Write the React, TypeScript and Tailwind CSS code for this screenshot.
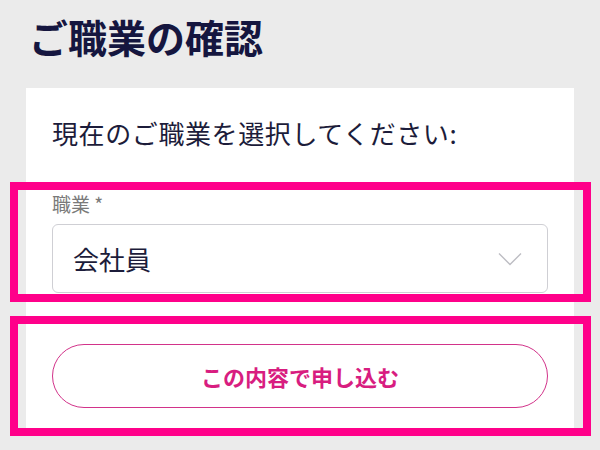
import React from "react";

const App: React.FC = () => {
  return (
    <div
      className="relative h-[450px] w-[600px] overflow-hidden bg-[#ebebeb] px-[26px]"
      style={{ fontFamily: '"Noto Sans CJK JP", "Noto Sans", sans-serif' }}
    >
      {/* Page title */}
      <h1 className="mt-[12px] pl-[3px] text-[39px] font-bold leading-[48px] text-[#15163f]">
        ご職業の確認
      </h1>

      {/* Card */}
      <div className="mt-[28px] bg-white px-[26px] pb-[24px] pt-[27px]">
        <p className="text-[26px] leading-[36px] tracking-[0.6px] text-[#1c1c3a]">
          現在のご職業を選択してください:
        </p>

        <div className="mt-[40px] flex flex-col gap-[8px]">
          <label className="text-[19px] leading-[25px] text-[#7a7a7a]">職業 *</label>
          <div className="flex h-[69px] w-full items-center justify-between rounded-[6px] border border-[#cfcfd4] pl-[20px] pr-[25px]">
            <span className="text-[26px] leading-[36px] text-[#1c1c3a]">会社員</span>
            <svg width="24" height="14" viewBox="0 0 24 14" fill="none">
              <path d="M1 1.5 L12 12.5 L23 1.5" stroke="#bdbdc3" strokeWidth="1.4" />
            </svg>
          </div>
        </div>

        <button className="mt-[51px] flex h-[64px] w-full items-center justify-center rounded-full border-[1.5px] border-[#d2338a] bg-white text-[22px] font-bold text-[#d81d80]">
          この内容で申し込む
        </button>
      </div>

      {/* Highlight overlays */}
      <div className="pointer-events-none absolute left-[10px] top-[182px] h-[120px] w-[581px] border-[8px] border-[#ff008a]" />
      <div className="pointer-events-none absolute left-[10px] top-[316px] h-[120px] w-[581px] border-[8px] border-[#ff008a]" />
    </div>
  );
};

export default App;
